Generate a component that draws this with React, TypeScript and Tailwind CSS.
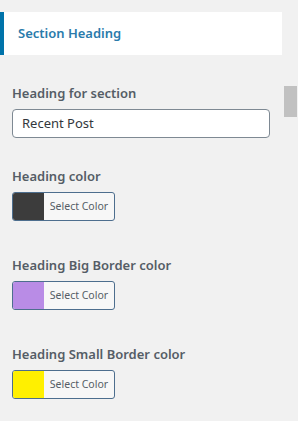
const font = { fontFamily: '"Segoe UI", "Noto Sans", "Open Sans", sans-serif' };

type ColorFieldProps = { label: string; swatch: string; className?: string };

function ColorField({ label, swatch, className }: ColorFieldProps) {
  return (
    <div className={className}>
      <div className="text-[13px] leading-[18px] font-semibold text-[#555d66] mb-[7px]">{label}</div>
      <button
        type="button"
        className="flex h-[29px] w-[103px] overflow-hidden rounded-[3px] border border-[#4d6e8e] bg-[#f7f7f7] p-0"
      >
        <span className="h-full w-[31px] shrink-0" style={{ backgroundColor: swatch }} />
        <span className="flex-1 self-center text-center text-[10.5px] leading-none text-[#555d66]">
          Select Color
        </span>
      </button>
    </div>
  );
}

export default function App() {
  return (
    <div className="relative h-[421px] w-[298px] overflow-hidden bg-[#f1f1f1]" style={font}>
      <div className="pt-[12px]">
        <div className="flex h-[43px] w-[282px] items-center border-l-4 border-[#0073aa] bg-white pl-[14px]">
          <span className="text-[13px] font-semibold text-[#2a7bab]">Section Heading</span>
        </div>
      </div>

      <div className="px-[12px]">
        <div className="mt-[29px]">
          <div className="text-[13px] leading-[18px] font-semibold text-[#555d66] mb-[7px]">Heading for section</div>
          <div className="flex h-[29px] w-[258px] items-center rounded-[4px] border border-[#7e8993] bg-white px-[9px] text-[13px] text-[#32373c]">
            Recent Post
          </div>
        </div>

        <ColorField className="mt-[29px]" label="Heading color" swatch="#3c3c3c" />
        <ColorField className="mt-[35px]" label="Heading Big Border color" swatch="#b98ce6" />
        <ColorField className="mt-[35px]" label="Heading Small Border color" swatch="#fff000" />
      </div>

      {/* scrollbar thumb */}
      <div className="absolute left-[284px] top-[86px] h-[31px] w-[13px] bg-[#c1c1c1]" />
    </div>
  );
}
